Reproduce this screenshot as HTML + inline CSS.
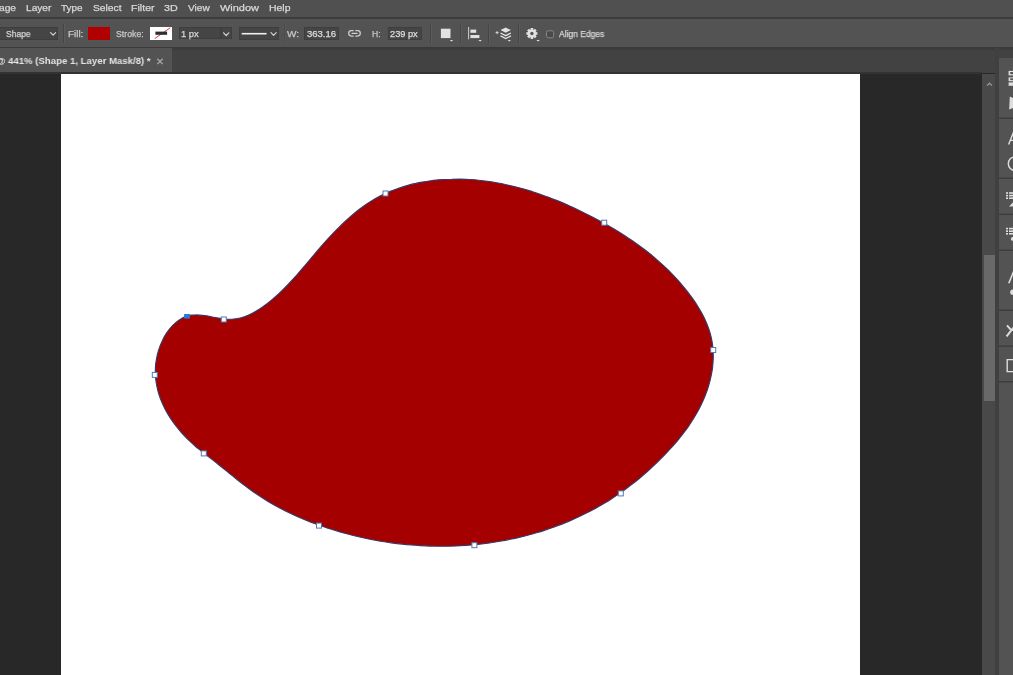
<!DOCTYPE html>
<html lang="en">
<head>
<meta charset="utf-8">
<title>Photoshop - Shape 1</title>
<style>
html,body{margin:0;padding:0;}
body{width:1013px;height:675px;overflow:hidden;background:#282828;position:relative;
  font-family:"Liberation Sans",sans-serif;color:#dcdcdc;}
.abs{position:absolute;}
.t{position:absolute;white-space:nowrap;line-height:1.2;transform-origin:0 0;will-change:transform;}
#menubar{left:0;top:0;width:1013px;height:18px;background:#505050;}
#menuline{left:0;top:17px;width:1013px;height:2px;background:#3c3c3c;}
#optbar{left:0;top:19px;width:1013px;height:29px;background:#535353;}
#optline{left:0;top:47px;width:1013px;height:1px;background:#3a3a3a;}
#tabbar{left:0;top:48px;width:1013px;height:25px;background:#424242;}
#tab{left:0;top:48px;width:172px;height:24px;background:#535353;}
#tabline{left:0;top:72px;width:982px;height:2px;background:#333333;}
#canvas{left:61px;top:74px;width:799px;height:601px;background:#ffffff;}
.box{position:absolute;background:#454545;border:1px solid #3e3e3e;box-sizing:border-box;}
.vdiv{position:absolute;width:1px;top:24px;height:19px;background:#454545;border-right:1px solid #5c5c5c;}
svg{position:absolute;overflow:visible;}
#vscroll{left:982px;top:74px;width:13px;height:601px;background:#494949;}
#vthumb{left:983.5px;top:255px;width:11px;height:145.5px;background:#696969;}
#gutter{left:995px;top:48px;width:4px;height:627px;background:#404040;}
#rpanel{left:999px;top:58px;width:14px;height:617px;background:#535353;}
#tabshade{left:172px;top:48px;width:841px;height:2px;background:#3c3c3c;}

</style>
</head>
<body>
<!-- top bars -->
<div class="abs" id="menubar"></div>
<div class="abs" id="optbar"></div>
<div class="abs" id="menuline"></div>
<div class="abs" id="optline"></div>
<div class="abs" id="tabbar"></div>
<div class="abs" id="tabshade"></div>
<div class="abs" id="tab"></div>
<div class="abs" id="tabline"></div>

<!-- options bar widgets -->
<div class="box" style="left:-1px;top:27px;width:59px;height:13px"></div>
<div class="vdiv" style="left:63px"></div>
<div class="abs" style="left:87.5px;top:26.5px;width:22.3px;height:13.5px;background:#b00000;"></div>
<div class="abs" style="left:150px;top:27px;width:22px;height:13px;background:#ffffff;"></div>
<div class="box" style="left:179px;top:27px;width:42px;height:12px"></div>
<div class="box" style="left:221px;top:27px;width:11px;height:12px"></div>
<div class="box" style="left:239px;top:27px;width:40px;height:13px"></div>
<div class="box" style="left:304px;top:27px;width:35px;height:13px"></div>
<div class="box" style="left:388px;top:27px;width:34px;height:13px"></div>
<div class="vdiv" style="left:284px;opacity:.45"></div>
<div class="vdiv" style="left:430px"></div>
<div class="vdiv" style="left:460px"></div>
<div class="vdiv" style="left:488px"></div>
<div class="vdiv" style="left:518px"></div>

<!-- canvas -->
<div class="abs" id="canvas"></div>

<!-- vertical scrollbar -->
<div class="abs" id="vscroll"></div>
<div class="abs" id="vthumb"></div>
<div class="abs" id="gutter"></div>

<!-- collapsed right panel strip -->
<div class="abs" id="rpanel"></div>

<!-- icon + artwork overlay (page coordinates) -->
<svg id="ov" width="1013" height="675" viewBox="0 0 1013 675" style="left:0;top:0">
  <!-- the red shape -->
  <path id="shape" d="M187.1,316.1C189.8,315.2 192.7,314.9 195.6,314.9C198.6,314.8 201.6,315.2 204.6,315.6C207.6,316.0 210.7,316.7 213.7,317.2C216.7,317.7 219.8,318.4 222.8,318.7C225.7,319.1 228.7,319.3 231.6,319.2C234.5,319.1 237.4,318.7 240.3,318.0C243.1,317.3 245.9,316.3 248.7,315.1C251.4,313.9 254.1,312.4 256.7,310.8C259.3,309.2 261.9,307.5 264.3,305.7C266.8,303.9 269.2,302.0 271.5,300.1C273.8,298.2 276.1,296.2 278.3,294.2C280.5,292.2 282.6,290.1 284.7,288.0C286.8,285.9 288.9,283.7 290.9,281.5C292.9,279.4 294.9,277.1 296.9,274.9C298.8,272.7 300.8,270.4 302.7,268.1C304.7,265.9 306.6,263.6 308.5,261.3C310.5,259.0 312.4,256.6 314.4,254.3C316.3,252.0 318.3,249.7 320.3,247.4C322.3,245.1 324.3,242.8 326.3,240.6C328.4,238.3 330.5,236.0 332.6,233.8C334.7,231.6 336.8,229.4 339.0,227.3C341.1,225.1 343.3,223.0 345.6,220.9C347.8,218.9 350.1,216.9 352.4,214.9C354.7,213.0 357.0,211.1 359.4,209.3C361.8,207.5 364.3,205.7 366.7,204.0C369.2,202.4 371.7,200.8 374.3,199.3C376.9,197.8 379.5,196.4 382.1,195.1C384.8,193.8 387.5,192.5 390.2,191.4C392.9,190.3 395.7,189.2 398.5,188.2C401.3,187.3 404.2,186.4 407.0,185.6C409.9,184.8 412.8,184.0 415.7,183.4C418.6,182.7 421.6,182.2 424.5,181.7C427.5,181.2 430.5,180.8 433.4,180.4C436.4,180.1 439.4,179.8 442.4,179.6C445.4,179.4 448.5,179.2 451.5,179.2C454.5,179.1 457.5,179.1 460.6,179.1C463.6,179.2 466.6,179.3 469.6,179.5C472.6,179.7 475.7,179.9 478.7,180.2C481.7,180.5 484.7,180.9 487.6,181.3C490.6,181.7 493.6,182.2 496.6,182.7C499.5,183.2 502.5,183.8 505.4,184.5C508.3,185.1 511.3,185.8 514.2,186.5C517.1,187.2 520.0,188.0 522.9,188.8C525.8,189.6 528.7,190.5 531.6,191.4C534.4,192.3 537.3,193.2 540.1,194.2C543.0,195.2 545.8,196.2 548.6,197.3C551.4,198.4 554.3,199.5 557.1,200.6C559.8,201.8 562.6,202.9 565.4,204.1C568.2,205.3 570.9,206.6 573.7,207.8C576.4,209.1 579.1,210.4 581.8,211.7C584.5,213.0 587.2,214.4 589.9,215.8C592.6,217.1 595.3,218.5 597.9,219.9C600.6,221.4 603.2,222.8 605.8,224.3C608.4,225.8 611.0,227.3 613.6,228.8C616.2,230.3 618.8,231.9 621.3,233.5C623.8,235.1 626.3,236.7 628.8,238.4C631.3,240.1 633.8,241.7 636.2,243.5C638.6,245.2 641.0,247.0 643.4,248.8C645.8,250.6 648.1,252.4 650.5,254.3C652.8,256.2 655.1,258.1 657.3,260.1C659.6,262.1 661.8,264.1 664.0,266.1C666.2,268.2 668.3,270.3 670.5,272.4C672.6,274.5 674.6,276.7 676.7,279.0C678.7,281.2 680.7,283.5 682.7,285.8C684.7,288.1 686.6,290.5 688.4,292.9C690.3,295.4 692.1,297.9 693.9,300.4C695.6,302.9 697.3,305.5 698.8,308.1C700.4,310.7 701.9,313.4 703.3,316.1C704.6,318.7 705.9,321.5 707.0,324.3C708.1,327.0 709.1,329.8 710.0,332.7C710.8,335.5 711.5,338.4 712.0,341.3C712.6,344.3 712.9,347.2 713.1,350.2C713.3,353.2 713.3,356.2 713.2,359.1C713.1,362.1 712.8,365.1 712.5,368.1C712.1,371.1 711.5,374.1 710.9,377.0C710.3,380.0 709.5,382.9 708.6,385.8C707.8,388.7 706.8,391.5 705.7,394.3C704.7,397.1 703.5,399.8 702.2,402.6C701.0,405.3 699.6,407.9 698.2,410.6C696.8,413.2 695.3,415.8 693.7,418.3C692.1,420.9 690.5,423.4 688.8,425.9C687.1,428.3 685.3,430.8 683.4,433.2C681.6,435.6 679.7,437.9 677.8,440.3C675.8,442.6 673.8,444.9 671.8,447.2C669.8,449.4 667.7,451.6 665.6,453.8C663.5,456.0 661.3,458.2 659.2,460.3C657.0,462.5 654.8,464.6 652.6,466.7C650.4,468.7 648.1,470.8 645.9,472.8C643.6,474.8 641.3,476.7 639.0,478.7C636.7,480.6 634.3,482.5 631.9,484.3C629.5,486.2 627.1,488.0 624.7,489.8C622.3,491.5 619.8,493.3 617.3,494.9C614.9,496.6 612.4,498.3 609.8,499.9C607.3,501.5 604.7,503.0 602.2,504.5C599.6,506.1 597.0,507.5 594.3,509.0C591.7,510.4 589.1,511.8 586.4,513.1C583.7,514.5 581.1,515.8 578.3,517.0C575.6,518.3 572.9,519.5 570.2,520.7C567.4,521.8 564.7,523.0 561.9,524.1C559.1,525.2 556.3,526.2 553.5,527.2C550.7,528.2 547.8,529.2 545.0,530.1C542.2,531.1 539.3,532.0 536.4,532.8C533.6,533.6 530.7,534.5 527.8,535.2C524.9,536.0 522.0,536.7 519.0,537.4C516.1,538.1 513.2,538.7 510.2,539.3C507.3,539.9 504.3,540.5 501.4,541.0C498.4,541.5 495.4,542.0 492.5,542.5C489.5,542.9 486.5,543.3 483.5,543.7C480.5,544.1 477.5,544.4 474.5,544.7C471.5,545.0 468.5,545.2 465.5,545.4C462.5,545.6 459.5,545.8 456.5,545.9C453.4,546.0 450.4,546.1 447.4,546.2C444.4,546.3 441.3,546.3 438.3,546.2C435.3,546.2 432.3,546.2 429.2,546.1C426.2,546.0 423.2,545.8 420.2,545.6C417.2,545.5 414.1,545.3 411.1,545.0C408.1,544.8 405.1,544.5 402.1,544.1C399.1,543.8 396.1,543.5 393.1,543.1C390.1,542.7 387.1,542.2 384.1,541.8C381.1,541.3 378.1,540.8 375.2,540.2C372.2,539.7 369.2,539.1 366.3,538.5C363.3,537.8 360.4,537.2 357.4,536.5C354.5,535.8 351.6,535.1 348.7,534.3C345.8,533.5 342.9,532.7 340.0,531.9C337.1,531.1 334.2,530.2 331.4,529.3C328.5,528.4 325.7,527.4 322.8,526.5C320.0,525.5 317.2,524.5 314.4,523.4C311.6,522.4 308.8,521.3 306.0,520.2C303.3,519.0 300.5,517.9 297.8,516.7C295.1,515.5 292.4,514.2 289.7,512.9C287.0,511.6 284.3,510.3 281.7,508.9C279.0,507.6 276.4,506.2 273.8,504.7C271.2,503.2 268.6,501.7 266.1,500.2C263.5,498.6 261.0,497.0 258.5,495.3C256.0,493.7 253.6,492.0 251.1,490.2C248.7,488.5 246.3,486.7 243.8,484.8C241.4,483.0 239.1,481.1 236.7,479.2C234.3,477.3 232.0,475.4 229.6,473.5C227.2,471.6 224.9,469.7 222.5,467.8C220.2,465.9 217.8,464.0 215.5,462.1C213.1,460.2 210.7,458.4 208.3,456.6C205.9,454.7 203.6,452.9 201.2,451.0C198.9,449.1 196.5,447.2 194.3,445.2C192.0,443.3 189.8,441.2 187.6,439.1C185.5,436.9 183.4,434.7 181.4,432.5C179.4,430.2 177.4,427.9 175.6,425.5C173.8,423.1 172.0,420.6 170.4,418.1C168.8,415.6 167.2,413.1 165.8,410.4C164.4,407.8 163.1,405.2 162.0,402.5C160.8,399.8 159.8,397.0 158.9,394.2C158.0,391.5 157.3,388.6 156.8,385.8C156.2,382.9 155.8,380.0 155.5,377.1C155.3,374.2 155.3,371.2 155.4,368.3C155.5,365.3 155.8,362.3 156.4,359.3C156.9,356.3 157.6,353.2 158.6,350.2C159.5,347.2 160.6,344.2 162.0,341.4C163.3,338.5 164.8,335.7 166.5,333.1C168.3,330.5 170.2,328.0 172.3,325.8C174.4,323.6 176.8,321.5 179.2,319.9C181.7,318.3 184.4,316.9 187.1,316.1Z"
        fill="#a40000" stroke="#3a3766" stroke-width="1.15"/>
  <!-- anchor points -->
  <g fill="#ffffff" stroke="#5579ad" stroke-width="1">
    <rect x="221.3" y="317.0" width="5" height="5"/>
    <rect x="383.0" y="191.0" width="5" height="5"/>
    <rect x="601.7" y="220.2" width="5" height="5"/>
    <rect x="710.7" y="347.5" width="5" height="5"/>
    <rect x="618.3" y="490.9" width="5" height="5"/>
    <rect x="471.9" y="542.7" width="5" height="5"/>
    <rect x="316.5" y="523.1" width="5" height="5"/>
    <rect x="201.3" y="450.9" width="5" height="5"/>
    <rect x="152.3" y="372.4" width="5" height="5"/>
  </g>
  <rect x="184.1" y="314.0" width="5.8" height="4.6" fill="#2b79d6"/>

  <!-- option-bar icons -->
  <g fill="none" stroke="#d2d2d2" stroke-width="1.2" stroke-linecap="round" stroke-linejoin="round">
    <polyline points="50.6,32.6 53.1,35.2 55.6,32.6"/>
    <polyline points="223.6,32.8 226.2,35.5 228.8,32.8"/>
    <polyline points="271,32.6 273.6,35.3 276.2,32.6"/>
  </g>
  <!-- stroke swatch content -->
  <line x1="154.7" y1="38.6" x2="170.2" y2="27.8" stroke="#d23c48" stroke-width="1"/>
  <rect x="155.4" y="31.6" width="11.7" height="3.2" fill="#2e2e2e"/>
  <!-- line style preview -->
  <line x1="241.7" y1="33.7" x2="266.6" y2="33.7" stroke="#f0f0f0" stroke-width="1.6"/>
  <!-- link icon -->
  <g fill="none" stroke="#cfcfcf" stroke-width="1.25" stroke-linecap="round">
    <path d="M353.2,30.6 H351.4 A2.7,2.7 0 0 0 351.4,36 H353.2"/>
    <path d="M355.8,30.6 H357.6 A2.7,2.7 0 0 1 357.6,36 H355.8"/>
    <line x1="352" y1="33.3" x2="357" y2="33.3"/>
  </g>
  <!-- path operations (square) -->
  <rect x="440.9" y="28.7" width="9.6" height="9.4" fill="#e2e2e2"/>
  <path d="M449.8,39.9 h3.4 l-1.7,1.7 z" fill="#e2e2e2"/>
  <!-- path alignment -->
  <line x1="468.6" y1="27" x2="468.6" y2="39.3" stroke="#cfcfcf" stroke-width="1"/>
  <rect x="470.4" y="29.6" width="5.8" height="3.2" fill="#e2e2e2"/>
  <rect x="470.4" y="35.0" width="9.0" height="3.1" fill="#e2e2e2"/>
  <path d="M478.4,39.9 h3.4 l-1.7,1.7 z" fill="#e2e2e2"/>
  <!-- path arrangement (stack) -->
  <g>
    <path d="M495.6,32.6 h3 M497.1,31.1 v3" stroke="#d8d8d8" stroke-width="1" fill="none"/>
    <path d="M505.7,27.4 l5.2,2.7 l-5.2,2.7 l-5.2,-2.7 z" fill="#e2e2e2"/>
    <path d="M500.5,33 l5.2,2.7 l5.2,-2.7" fill="none" stroke="#e2e2e2" stroke-width="1.3"/>
    <path d="M500.5,35.9 l5.2,2.7 l5.2,-2.7" fill="none" stroke="#e2e2e2" stroke-width="1.3"/>
    <path d="M507.6,39.9 h3.4 l-1.7,1.7 z" fill="#e2e2e2"/>
  </g>
  <!-- gear -->
  <g transform="translate(531.9,33.5)">
    <g fill="#e2e2e2">
      <rect x="-1.3" y="-5.5" width="2.6" height="11"/>
      <rect x="-1.3" y="-5.5" width="2.6" height="11" transform="rotate(45)"/>
      <rect x="-1.3" y="-5.5" width="2.6" height="11" transform="rotate(90)"/>
      <rect x="-1.3" y="-5.5" width="2.6" height="11" transform="rotate(135)"/>
      <circle r="4.1"/>
    </g>
    <circle r="1.7" fill="#535353"/>
  </g>
  <path d="M536.4,39.9 h3.4 l-1.7,1.7 z" fill="#e2e2e2"/>
  <!-- checkbox -->
  <rect x="546.5" y="30.8" width="7.2" height="7" rx="1.6" fill="#4a4a4a" stroke="#858585" stroke-width="1"/>
  <!-- tab close -->
  <path d="M157.3,58.7 l5.4,5.4 M162.7,58.7 l-5.4,5.4" stroke="#a8a8a8" stroke-width="1.3" fill="none"/>
  <!-- collapsed panel strip: separators + clipped icons -->
  <g fill="#3a3a3a">
    <rect x="999" y="117.6" width="14" height="1.2"/>
    <rect x="999" y="177.6" width="14" height="1.2"/>
    <rect x="999" y="213.8" width="14" height="1.2"/>
    <rect x="999" y="249.6" width="14" height="1.2"/>
    <rect x="999" y="309.6" width="14" height="1.2"/>
    <rect x="999" y="345.5" width="14" height="1.2"/>
    <rect x="999" y="381.2" width="14" height="1.2"/>
  </g>
  <g fill="#dedede">
    <!-- group 1 -->
    <rect x="1008.6" y="70.9" width="6" height="4.5"/>
    <rect x="1008.6" y="77.4" width="6" height="3.8"/>
    <rect x="1008.6" y="82.4" width="6" height="3.4"/>
    <rect x="1010.2" y="72" width="3" height="2.2" fill="#555"/>
    <rect x="1010.2" y="78.3" width="3" height="1.8" fill="#555"/>
    <path d="M1009.8,96.4 L1014,98.4 V107.6 L1009.2,109.4 Z"/>
    <!-- group 3 -->
    <rect x="1006" y="192.2" width="2" height="1.6"/><rect x="1009" y="192.2" width="5" height="1.6"/>
    <rect x="1006" y="194.8" width="2" height="1.6"/><rect x="1009" y="194.8" width="5" height="1.6"/>
    <rect x="1006" y="197.4" width="2" height="1.6"/><rect x="1009" y="197.4" width="5" height="1.6"/>
    <path d="M1009,206.4 L1013.5,201.6 V206.4 Z"/>
    <!-- group 4 -->
    <rect x="1006" y="227.8" width="2" height="1.6"/><rect x="1009" y="227.8" width="5" height="1.6"/>
    <rect x="1006" y="230.4" width="2" height="1.6"/><rect x="1009" y="230.4" width="5" height="1.6"/>
    <rect x="1006" y="233.0" width="2" height="1.6"/><rect x="1009" y="233.0" width="5" height="1.6"/>
    <circle cx="1012.6" cy="238.9" r="1.8"/>
    <!-- group 5 -->
    <circle cx="1012.8" cy="292.2" r="2.6"/>
  </g>
  <g fill="none" stroke="#dedede">
    <!-- group 2 -->
    <path d="M1008.6,144.6 L1014,131 M1010.2,140.4 H1014" stroke-width="1.4"/>
    <circle cx="1015.2" cy="163.7" r="6.9" stroke-width="1.4"/>
    <!-- group 5: letter A fragment -->
    <path d="M1008.8,283.2 L1014,270.6" stroke-width="1.6"/>
    <!-- group 6: tools -->
    <path d="M1006.6,336.4 L1013.5,327.6 M1007,325.4 L1010.6,329.4 L1013.6,330.2" stroke-width="2"/>
    <!-- group 7: box -->
    <path d="M1014,359.6 H1007.2 V371.6 H1014" stroke-width="1.4"/>
  </g>
  <!-- scrollbar up arrow -->
  <polyline points="987,85.6 989.5,83.2 992,85.6" fill="none" stroke="#9a9a9a" stroke-width="1.2"/>
</svg>

<!-- text labels -->
<span class="t" id="m0" style="left:-0.88px;top:2.0px;font-size:9.6px;font-weight:400;color:#d8d8d8;-webkit-text-stroke:0.25px #d8d8d8;transform:scaleX(1.0657)">age</span>
<span class="t" id="m1" style="left:26.32px;top:2.0px;font-size:9.6px;font-weight:400;color:#d8d8d8;-webkit-text-stroke:0.25px #d8d8d8;transform:scaleX(1.0563)">Layer</span>
<span class="t" id="m2" style="left:61.42px;top:2.0px;font-size:9.6px;font-weight:400;color:#d8d8d8;-webkit-text-stroke:0.25px #d8d8d8;transform:scaleX(1.0358)">Type</span>
<span class="t" id="m3" style="left:92.92px;top:2.0px;font-size:9.6px;font-weight:400;color:#d8d8d8;-webkit-text-stroke:0.25px #d8d8d8;transform:scaleX(1.0723)">Select</span>
<span class="t" id="m4" style="left:130.82px;top:2.0px;font-size:9.6px;font-weight:400;color:#d8d8d8;-webkit-text-stroke:0.25px #d8d8d8;transform:scaleX(1.1072)">Filter</span>
<span class="t" id="m5" style="left:164.42px;top:2.0px;font-size:9.6px;font-weight:400;color:#d8d8d8;-webkit-text-stroke:0.25px #d8d8d8;transform:scaleX(1.1210)">3D</span>
<span class="t" id="m6" style="left:187.72px;top:2.0px;font-size:9.6px;font-weight:400;color:#d8d8d8;-webkit-text-stroke:0.25px #d8d8d8;transform:scaleX(1.0501)">View</span>
<span class="t" id="m7" style="left:220.02px;top:2.0px;font-size:9.6px;font-weight:400;color:#d8d8d8;-webkit-text-stroke:0.25px #d8d8d8;transform:scaleX(1.1398)">Window</span>
<span class="t" id="m8" style="left:268.92px;top:2.0px;font-size:9.6px;font-weight:400;color:#d8d8d8;-webkit-text-stroke:0.25px #d8d8d8;transform:scaleX(1.0876)">Help</span>
<span class="t" id="o0" style="left:6.08px;top:28.5px;font-size:8.6px;font-weight:400;color:#d4d4d4;-webkit-text-stroke:0.25px #d4d4d4;transform:scaleX(0.9893)">Shape</span>
<span class="t" id="o1" style="left:68.38px;top:28.5px;font-size:8.6px;font-weight:400;color:#c8c8c8;-webkit-text-stroke:0.25px #c8c8c8;transform:scaleX(1.1486)">Fill:</span>
<span class="t" id="o2" style="left:116.08px;top:28.5px;font-size:8.6px;font-weight:400;color:#c8c8c8;-webkit-text-stroke:0.25px #c8c8c8;transform:scaleX(1.0197)">Stroke:</span>
<span class="t" id="o3" style="left:181.48px;top:28.5px;font-size:8.6px;font-weight:400;color:#d4d4d4;-webkit-text-stroke:0.25px #d4d4d4;transform:scaleX(1.0958)">1 px</span>
<span class="t" id="o4" style="left:287.08px;top:28.5px;font-size:8.6px;font-weight:400;color:#c8c8c8;-webkit-text-stroke:0.25px #c8c8c8;transform:scaleX(1.1632)">W:</span>
<span class="t" id="o5" style="left:307.08px;top:28.5px;font-size:8.6px;font-weight:400;color:#dcdcdc;-webkit-text-stroke:0.25px #dcdcdc;transform:scaleX(1.1051)">363.16</span>
<span class="t" id="o6" style="left:371.88px;top:28.5px;font-size:8.6px;font-weight:400;color:#c8c8c8;-webkit-text-stroke:0.25px #c8c8c8;transform:scaleX(0.9924)">H:</span>
<span class="t" id="o7" style="left:390.38px;top:28.5px;font-size:8.6px;font-weight:400;color:#dcdcdc;-webkit-text-stroke:0.25px #dcdcdc;transform:scaleX(1.0743)">239 px</span>
<span class="t" id="o8" style="left:558.68px;top:28.5px;font-size:8.6px;font-weight:400;color:#d8d8d8;-webkit-text-stroke:0.25px #d8d8d8;transform:scaleX(0.9877)">Align Edges</span>
<span class="t" id="t0" style="left:-3.99px;top:55.2px;font-size:9.8px;font-weight:700;color:#e4e4e4;transform:scaleX(0.9809)">@ 441% (Shape 1, Layer Mask/8) *</span>
</body>
</html>
